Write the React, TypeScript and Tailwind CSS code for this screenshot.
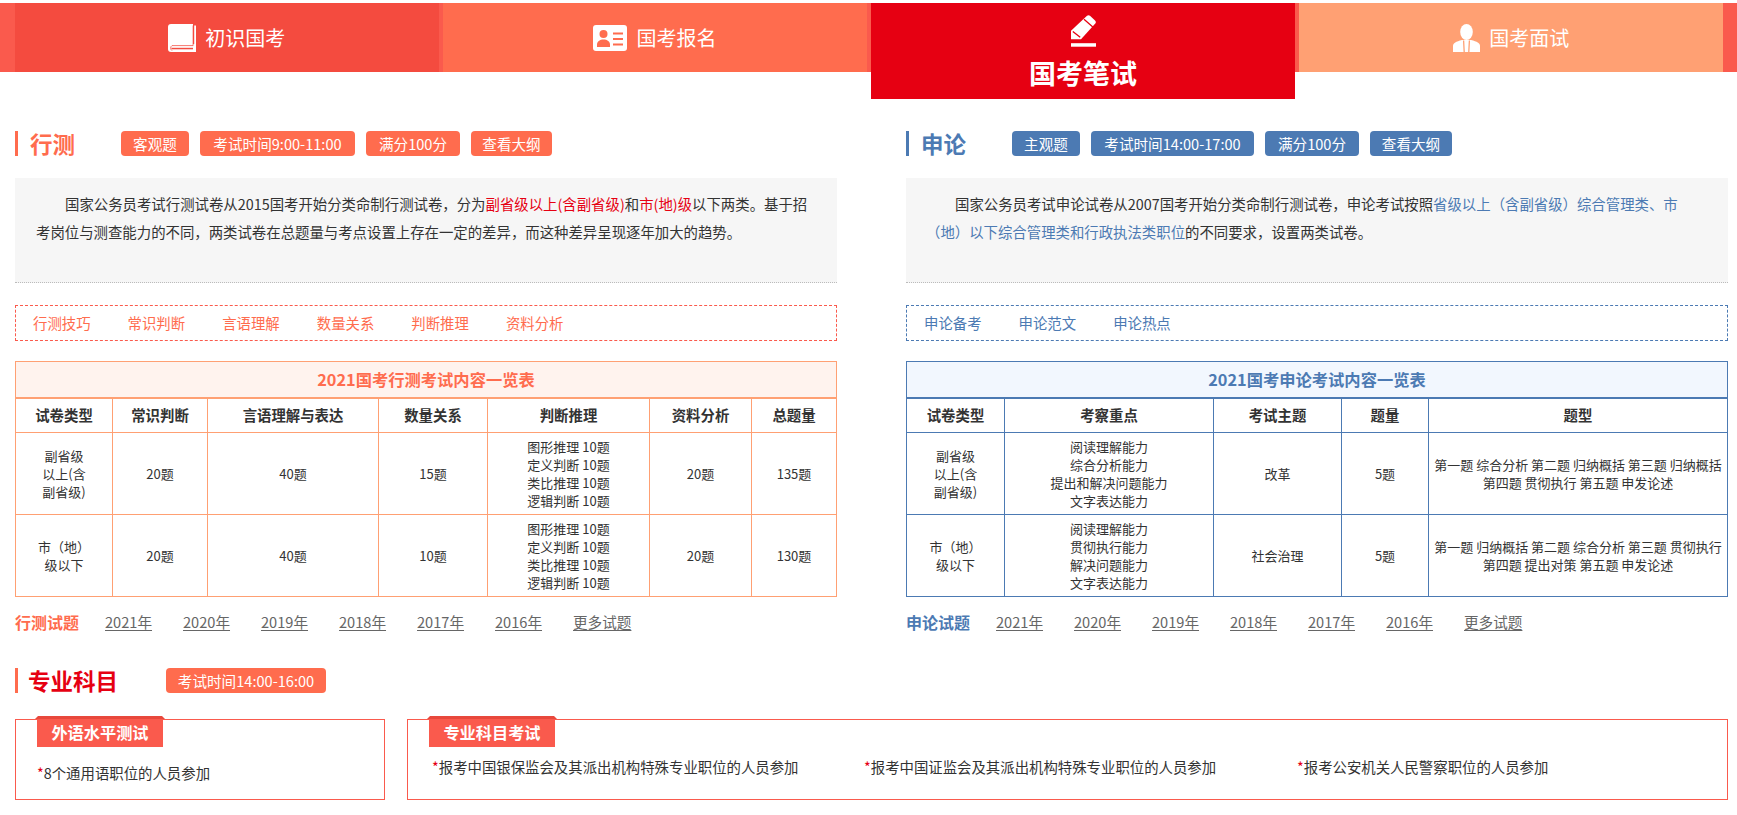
import React from "react";

const font = "font-['Noto_Sans_CJK_SC','Liberation_Sans',sans-serif]";

function BookIcon() {
  return (
    <svg width="28" height="28" viewBox="0 0 28 28" className="shrink-0">
      <path d="M3 0h22v22H0V3a3 3 0 0 1 3-3z" fill="#fff" />
      <path d="M0 20h27.500v8H3a3 3 0 0 1-3-3z" fill="#fff" />
      <rect x="26.200" y="1.500" width="1.800" height="26.500" fill="#fff" />
      <path d="M25.100 1.500V21.600H4a3 3 0 0 0 0 5" stroke="#f44b3f" strokeWidth="1" fill="none" opacity=".75" />
      <rect x="3.500" y="23.800" width="21.500" height="1.500" fill="#f44b3f" />
    </svg>
  );
}

function IdIcon() {
  return (
    <svg width="34" height="26" viewBox="0 0 34 26" className="shrink-0">
      <rect width="34" height="26" rx="3" fill="#fff" />
      <circle cx="10.500" cy="9" r="4" fill="#ff6c4e" />
      <path d="M4 22v-2.500c0-3 3-5 6.500-5s6.500 2 6.500 5V22z" fill="#ff6c4e" />
      <rect x="20" y="7.500" width="10" height="2" fill="#ff6c4e" />
      <rect x="20" y="13" width="10" height="2" fill="#ff6c4e" />
      <rect x="20" y="18.500" width="10" height="2" fill="#ff6c4e" />
    </svg>
  );
}

function PencilIcon() {
  return (
    <svg width="25" height="32" viewBox="0 0 25 32" className="shrink-0">
      <path d="M16 .8q1.500-1.200 3 0l5 4.700q1.500 1.500.3 3L10 24.300H0v-8.600z" fill="#fff" />
      <path d="M13 4.300l8.800 7.600M1.800 16.400l7.400 5.800" stroke="#e60012" strokeWidth="1.300" fill="none" />
      <rect y="28.200" width="25" height="3.500" fill="#fff" />
    </svg>
  );
}

function PersonIcon() {
  return (
    <svg width="27" height="28" viewBox="0 0 27 28" className="shrink-0">
      <ellipse cx="13.500" cy="8" rx="6.300" ry="8" fill="#fff" />
      <path d="M0 28v-6c0-3 3-4.500 9-6h9c6 1.500 9 3 9 6v6z" fill="#fff" />
      <path d="M10.600 16.500l.6 11.500M16.400 16.500l-.6 11.500" stroke="#ffa073" strokeWidth="1.300" fill="none" />
    </svg>
  );
}

function Tab({ icon, label, className }: { icon: React.ReactNode; label: string; className: string }) {
  return (
    <div className={`flex-1 flex items-center justify-center gap-[9px] text-white text-[20px] ${className}`}>
      {icon}
      <span>{label}</span>
    </div>
  );
}

function Badge({ children, className }: { children: React.ReactNode; className: string }) {
  return (
    <span className={`h-[25px] rounded-[4px] text-center text-white text-[14.6px] leading-[25px] whitespace-nowrap ${className}`}>
      {children}
    </span>
  );
}

function Heading({ title, className, children }: { title: string; className: string; children: React.ReactNode }) {
  return (
    <div className="flex items-center h-[25px]">
      <div className={`flex items-center h-[25px] border-l-[3px] text-[22.5px] font-bold ${className}`}>
        {title}
      </div>
      <div className="flex gap-[11px]">{children}</div>
    </div>
  );
}

function Lines({ items }: { items: string[] }) {
  return (
    <>
      {items.map((t, i) => (
        <div key={i} className="whitespace-nowrap">{t}</div>
      ))}
    </>
  );
}

function FooterLinks({ title, color }: { title: string; color: string }) {
  const years = ["2021年", "2020年", "2019年", "2018年", "2017年", "2016年", "更多试题"];
  return (
    <div className="flex items-center h-[20px] mt-[15px]">
      <span className={`text-[16px] font-bold mr-[26px] ${color}`}>{title}</span>
      <div className="flex text-[14.6px] text-[#666]">
        {years.map((y) => (
          <div key={y} className="w-[78px]">
            <a className="underline underline-offset-2">{y}</a>
          </div>
        ))}
      </div>
    </div>
  );
}

const cell = "border border-[#ffa073] text-center align-middle p-0";
const bcell = "border border-[#4c7ab3] text-center align-middle p-0";

const tuili = ["图形推理 10题", "定义判断 10题", "类比推理 10题", "逻辑判断 10题"];

function XingceTable() {
  const heads = ["试卷类型", "常识判断", "言语理解与表达", "数量关系", "判断推理", "资料分析", "总题量"];
  return (
    <table className="w-[821px] table-fixed border-collapse text-[13px] leading-[18px] text-[#333] mt-[20px]">
      <colgroup>
        <col className="w-[97px]" />
        <col className="w-[95px]" />
        <col className="w-[171px]" />
        <col className="w-[109px]" />
        <col className="w-[162px]" />
        <col className="w-[102px]" />
        <col className="w-[85px]" />
      </colgroup>
      <tbody>
        <tr className="h-[36px]">
          <td colSpan={7} className="border border-[#ffa073] border-b-2 bg-[#fff3ee] text-center text-[16.3px] font-bold text-[#ff6c4e]">
            2021国考行测考试内容一览表
          </td>
        </tr>
        <tr className="h-[35px]">
          {heads.map((h) => (
            <td key={h} className={`${cell} text-[14.4px] font-bold`}>{h}</td>
          ))}
        </tr>
        <tr className="h-[82px]">
          <td className={cell}><Lines items={["副省级", "以上(含", "副省级)"]} /></td>
          <td className={cell}>20题</td>
          <td className={cell}>40题</td>
          <td className={cell}>15题</td>
          <td className={cell}><Lines items={tuili} /></td>
          <td className={cell}>20题</td>
          <td className={cell}>135题</td>
        </tr>
        <tr className="h-[82px]">
          <td className={cell}><Lines items={["市（地）", "级以下"]} /></td>
          <td className={cell}>20题</td>
          <td className={cell}>40题</td>
          <td className={cell}>10题</td>
          <td className={cell}><Lines items={tuili} /></td>
          <td className={cell}>20题</td>
          <td className={cell}>130题</td>
        </tr>
      </tbody>
    </table>
  );
}

function ShenlunTable() {
  const heads = ["试卷类型", "考察重点", "考试主题", "题量", "题型"];
  return (
    <table className="w-[821px] table-fixed border-collapse text-[13px] leading-[18px] text-[#333] mt-[20px]">
      <colgroup>
        <col className="w-[98px]" />
        <col className="w-[209px]" />
        <col className="w-[128px]" />
        <col className="w-[87px]" />
        <col className="w-[299px]" />
      </colgroup>
      <tbody>
        <tr className="h-[36px]">
          <td colSpan={5} className="border border-[#4c7ab3] border-b-2 bg-[#f2f7fe] text-center text-[16.3px] font-bold text-[#4c7ab3]">
            2021国考申论考试内容一览表
          </td>
        </tr>
        <tr className="h-[35px]">
          {heads.map((h) => (
            <td key={h} className={`${bcell} text-[14.4px] font-bold`}>{h}</td>
          ))}
        </tr>
        <tr className="h-[82px]">
          <td className={bcell}><Lines items={["副省级", "以上(含", "副省级)"]} /></td>
          <td className={bcell}><Lines items={["阅读理解能力", "综合分析能力", "提出和解决问题能力", "文字表达能力"]} /></td>
          <td className={bcell}>改革</td>
          <td className={bcell}>5题</td>
          <td className={bcell}><Lines items={["第一题 综合分析 第二题 归纳概括 第三题 归纳概括", "第四题 贯彻执行 第五题 申发论述"]} /></td>
        </tr>
        <tr className="h-[82px]">
          <td className={bcell}><Lines items={["市（地）", "级以下"]} /></td>
          <td className={bcell}><Lines items={["阅读理解能力", "贯彻执行能力", "解决问题能力", "文字表达能力"]} /></td>
          <td className={bcell}>社会治理</td>
          <td className={bcell}>5题</td>
          <td className={bcell}><Lines items={["第一题 归纳概括 第二题 综合分析 第三题 贯彻执行", "第四题 提出对策 第五题 申发论述"]} /></td>
        </tr>
      </tbody>
    </table>
  );
}

function Label({ text }: { text: string }) {
  return (
    <div className="absolute left-[19px] -top-[4px] w-[130px] flex flex-col items-center">
      <div className="w-[130px] h-[3px] bg-[#e8483c] [clip-path:polygon(3px_0,127px_0,130px_100%,0_100%)]" />
      <div className="w-[126px] h-[28px] bg-[#fa5a4d] text-white text-[16.200px] font-bold leading-[26px] text-center">{text}</div>
    </div>
  );
}

function Star({ text }: { text: string }) {
  return (
    <span className="text-[14.4px] text-[#333] whitespace-nowrap">
      <span className="text-[#e60012]">*</span>
      {text}
    </span>
  );
}

export default function App() {
  return (
    <div className={`w-[1737px] h-[815px] overflow-hidden bg-white pt-[3px] ${font}`}>
      {/* top tabs */}
      <div className="flex gap-[4.500px] h-[69px] pl-[15px] pr-[14px] bg-[#fa5a4d]">
        <Tab icon={<BookIcon />} label="初识国考" className="bg-[#f44b3f]" />
        <Tab icon={<IdIcon />} label="国考报名" className="bg-[#ff6c4e]" />
        <div className="flex-1 h-[96px] bg-[#e60012] flex flex-col items-center pt-[12px] text-white">
          <PencilIcon />
          <div className="text-[27px] font-bold leading-[36px] mt-[8px]">国考笔试</div>
        </div>
        <Tab icon={<PersonIcon />} label="国考面试" className="bg-[#ffa073]" />
      </div>

      {/* two columns */}
      <div className="flex gap-[69px] pl-[15px] mt-[59px]">
        <div className="w-[822px]">
          <Heading title="行测" className="w-[106px] pl-[12px] border-[#ff6c4e] text-[#ff6c4e]">
            <Badge className="w-[68px] bg-[#ff6c4e]">客观题</Badge>
            <Badge className="w-[155px] bg-[#ff6c4e]">考试时间9:00-11:00</Badge>
            <Badge className="w-[94px] bg-[#ff6c4e]">满分100分</Badge>
            <Badge className="w-[81px] bg-[#ff6c4e]">查看大纲</Badge>
          </Heading>
          <div className="h-[105px] mt-[22px] pt-[12px] pl-[21px] pr-[20px] bg-[#f6f6f6] border-b border-dotted border-[#bbb] text-[14.4px] leading-[28px] text-[#333] indent-[29px]">
            国家公务员考试行测试卷从2015国考开始分类命制行测试卷，分为<span className="text-[#e60012]">副省级以上(含副省级)</span>和<span className="text-[#e60012]">市(地)级</span>以下两类。基于招考岗位与测查能力的不同，两类试卷在总题量与考点设置上存在一定的差异，而这种差异呈现逐年加大的趋势。
          </div>
          <div className="flex items-center gap-[37px] h-[36px] mt-[22px] pl-[17px] pb-[1px] border border-dashed border-[#fa5a4d] text-[14.4px] text-[#ff6c4e]">
            <span>行测技巧</span>
            <span>常识判断</span>
            <span>言语理解</span>
            <span>数量关系</span>
            <span>判断推理</span>
            <span>资料分析</span>
          </div>
          <XingceTable />
          <FooterLinks title="行测试题" color="text-[#ff6c4e]" />
        </div>

        <div className="w-[822px]">
          <Heading title="申论" className="w-[106px] pl-[12px] border-[#4c7ab3] text-[#4c7ab3]">
            <Badge className="w-[68px] bg-[#4c7ab3]">主观题</Badge>
            <Badge className="w-[163px] bg-[#4c7ab3]">考试时间14:00-17:00</Badge>
            <Badge className="w-[94px] bg-[#4c7ab3]">满分100分</Badge>
            <Badge className="w-[82px] bg-[#4c7ab3]">查看大纲</Badge>
          </Heading>
          <div className="h-[105px] mt-[22px] pt-[12px] pl-[20px] pr-[40px] bg-[#f6f6f6] border-b border-dotted border-[#bbb] text-[14.4px] leading-[28px] text-[#333] indent-[29px]">
            国家公务员考试申论试卷从2007国考开始分类命制行测试卷，申论考试按照<span className="text-[#4c7ab3]">省级以上（含副省级）综合管理类、市（地）以下综合管理类和行政执法类职位</span>的不同要求，设置两类试卷。
          </div>
          <div className="flex items-center gap-[37px] h-[36px] mt-[22px] pl-[17px] pb-[1px] border border-dashed border-[#4c7ab3] text-[14.4px] text-[#4c7ab3]">
            <span>申论备考</span>
            <span>申论范文</span>
            <span>申论热点</span>
          </div>
          <ShenlunTable />
          <FooterLinks title="申论试题" color="text-[#4c7ab3]" />
        </div>
      </div>

      {/* professional subjects */}
      <div className="pl-[15px] mt-[36px]">
        <Heading title="专业科目" className="w-[151px] pl-[10px] border-[#ff6c4e] text-[#e60012]">
          <Badge className="w-[160px] bg-[#ff6c4e]">考试时间14:00-16:00</Badge>
        </Heading>
        <div className="flex gap-[22px] mt-[26px]">
          <div className="relative w-[370px] h-[81px] border border-[#fa5a4d] pl-[21px] pt-[40px]">
            <Label text="外语水平测试" />
            <Star text="8个通用语职位的人员参加" />
          </div>
          <div className="relative w-[1321px] h-[81px] border border-[#fa5a4d] pl-[24px] pt-[34px]">
            <Label text="专业科目考试" />
            <div className="flex">
              <div className="w-[432px]"><Star text="报考中国银保监会及其派出机构特殊专业职位的人员参加" /></div>
              <div className="w-[433px]"><Star text="报考中国证监会及其派出机构特殊专业职位的人员参加" /></div>
              <div><Star text="报考公安机关人民警察职位的人员参加" /></div>
            </div>
          </div>
        </div>
      </div>
    </div>
  );
}
